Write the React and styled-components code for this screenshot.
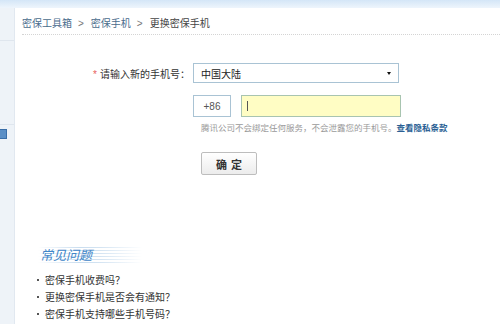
import React from 'react';
import styled, { createGlobalStyle } from 'styled-components';

const GlobalStyle = createGlobalStyle`
  html, body {
    margin: 0;
    padding: 0;
    background: #fff;
  }
  body {
    font-family: "Liberation Sans", "Noto Sans CJK SC", sans-serif;
    font-size: 10px;
    color: #333;
  }
`;

const Page = styled.div`
  width: 500px;
  height: 324px;
  overflow: hidden;
  display: flex;
  flex-direction: column;
`;

const TopBand = styled.div`
  height: 8px;
  flex-shrink: 0;
  background: linear-gradient(to bottom, #d4e6f7, #eef5fc);
`;

const Body = styled.div`
  flex: 1;
  display: flex;
`;

const Sidebar = styled.div`
  width: 14px;
  flex-shrink: 0;
  background: #eef3f8;
  border-right: 1px solid #e1e8f0;
  display: flex;
  flex-direction: column;
`;

const SideBlock = styled.div`
  height: ${p => p.h}px;
  border-bottom: 1px solid #dfe6ee;
`;

const SideIcon = styled.div`
  width: 7px;
  height: 10px;
  margin-top: 4px;
  background: #5b8fc6;
  border: 1px solid #3a6ea8;
  border-left: none;
  box-sizing: border-box;
`;

const Main = styled.div`
  flex: 1;
  display: flex;
  flex-direction: column;
`;

const Breadcrumb = styled.div`
  margin-left: 7px;
  padding: 8px 0 2px;
  line-height: 16px;
  border-bottom: 1px dotted #d4d4d4;
  display: flex;
  align-items: center;
  font-size: 10px;
`;

const Crumb = styled.span`
  color: ${p => (p.current ? '#444' : '#4a6c8c')};
`;

const Sep = styled.span`
  color: #777;
  margin: 0 7px 0 6px;
`;

const Form = styled.div`
  margin-top: 28px;
  display: grid;
  grid-template-columns: 175px 1fr;
  column-gap: 3px;
  row-gap: 12px;
  align-items: center;
`;

const Label = styled.label`
  text-align: right;
  font-size: 10px;
  color: #333;
`;

const Star = styled.span`
  color: #e8625c;
  margin-right: 3px;
`;

const Select = styled.div`
  width: 206px;
  height: 20px;
  box-sizing: border-box;
  border: 1px solid #a9c3d4;
  background: #fff;
  display: flex;
  align-items: center;
  justify-content: space-between;
  padding: 0 7px 0 7px;
  font-size: 10px;
  color: #222;
`;

const Caret = styled.span`
  width: 0;
  height: 0;
  border-left: 2px solid transparent;
  border-right: 2px solid transparent;
  border-top: 3px solid #111;
`;

const PhoneRow = styled.div`
  display: flex;
  gap: 10px;
`;

const Code = styled.div`
  width: 38px;
  height: 22px;
  box-sizing: border-box;
  border: 1px solid #a9c3d4;
  display: flex;
  align-items: center;
  justify-content: center;
  font-size: 10px;
  color: #555;
`;

const PhoneInput = styled.div`
  width: 160px;
  height: 22px;
  box-sizing: border-box;
  border: 1px solid #a8c4b0;
  background: #fffdc4;
  display: flex;
  align-items: center;
  padding-left: 5px;
`;

const Cursor = styled.span`
  width: 1px;
  height: 10px;
  background: #555;
`;

const Empty = styled.div``;

const Extra = styled.div`
  padding-left: 8px;
  display: flex;
  flex-direction: column;
  align-items: flex-start;
`;

const Hint = styled.div`
  margin-top: -7px;
  line-height: 12px;
  font-size: 8.5px;
  color: #9a9a9a;
`;

const HintLink = styled.a`
  color: #2b5f94;
  font-weight: bold;
  text-decoration: none;
`;

const Button = styled.button`
  margin-top: 18px;
  width: 56px;
  height: 23px;
  border: 1px solid #bdbdbd;
  border-radius: 2px;
  background: linear-gradient(to bottom, #ffffff, #ececec);
  font-family: "Noto Sans CJK SC", sans-serif;
  font-size: 11px;
  font-weight: bold;
  color: #333;
  letter-spacing: 4px;
  padding: 0 0 0 4px;
`;

const Faq = styled.div`
  margin: 72px 0 0 23px;
`;

const FaqTitle = styled.div`
  width: 102px;
  height: 16px;
  line-height: 16px;
  padding-left: 2px;
  font-family: "Noto Sans CJK SC", sans-serif;
  font-size: 13px;
  font-style: italic;
  color: #3f86c8;
  background:
    linear-gradient(to right, #fff 0%, rgba(255,255,255,0) 40%, rgba(255,255,255,0.2) 60%, #fff 100%),
    repeating-linear-gradient(to bottom, #c9ddef 0 1px, transparent 1px 3px);
`;

const FaqList = styled.ul`
  list-style: none;
  margin: 8px 0 0;
  padding: 0;
`;

const FaqItem = styled.li`
  display: flex;
  align-items: center;
  height: 17px;
  font-size: 10px;
  color: #333;
  &::before {
    content: '';
    width: 2px;
    height: 2px;
    background: #555;
    margin: 0 6px 0 -1px;
  }
`;

const faqs = ['密保手机收费吗？', '更换密保手机是否会有通知？', '密保手机支持哪些手机号码？'];

export default function App() {
  return (
    <Page>
      <GlobalStyle />
      <TopBand />
      <Body>
        <Sidebar>
          <SideBlock h={32} />
          <SideBlock h={83} />
          <SideIcon />
        </Sidebar>
        <Main>
          <Breadcrumb>
            <Crumb>密保工具箱</Crumb>
            <Sep>&gt;</Sep>
            <Crumb>密保手机</Crumb>
            <Sep>&gt;</Sep>
            <Crumb current>更换密保手机</Crumb>
          </Breadcrumb>
          <Form>
            <Label>
              <Star>*</Star>请输入新的手机号：
            </Label>
            <Select>
              中国大陆
              <Caret />
            </Select>
            <Empty />
            <PhoneRow>
              <Code>+86</Code>
              <PhoneInput>
                <Cursor />
              </PhoneInput>
            </PhoneRow>
            <Empty />
            <Extra>
              <Hint>
                腾讯公司不会绑定任何服务，不会泄露您的手机号。<HintLink>查看隐私条款</HintLink>
              </Hint>
              <Button>确定</Button>
            </Extra>
          </Form>
          <Faq>
            <FaqTitle>常见问题</FaqTitle>
            <FaqList>
              {faqs.map(q => (
                <FaqItem key={q}>{q}</FaqItem>
              ))}
            </FaqList>
          </Faq>
        </Main>
      </Body>
    </Page>
  );
}
